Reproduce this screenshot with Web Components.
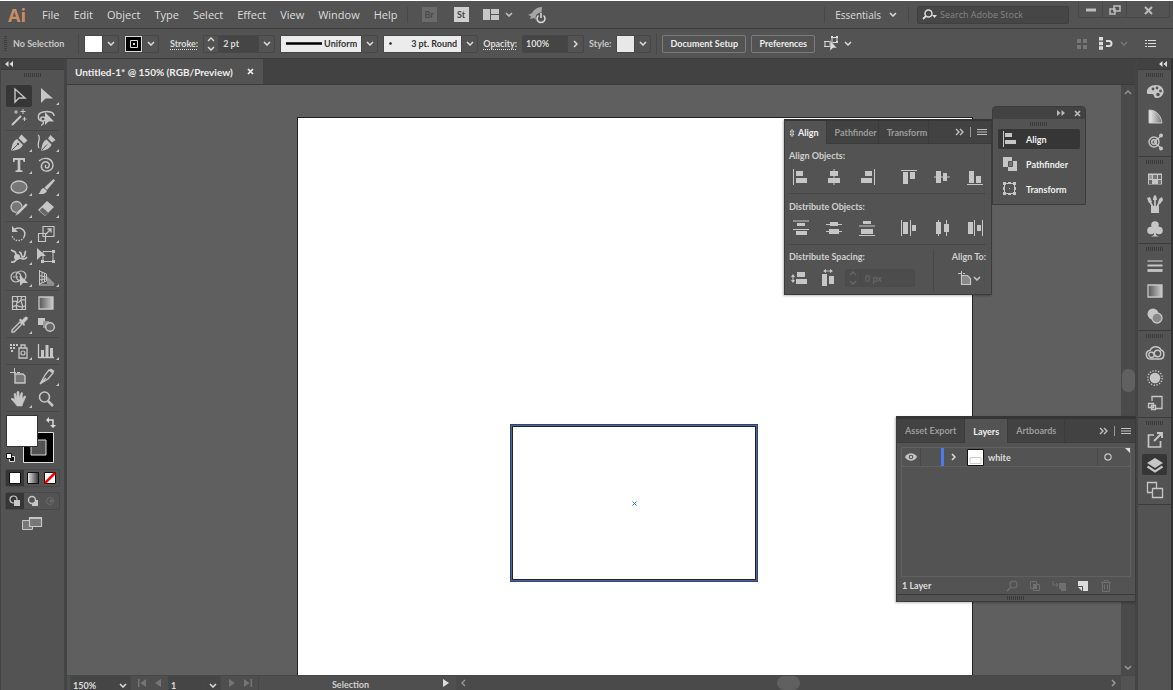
<!DOCTYPE html>
<html lang="en">
<head>
<meta charset="utf-8">
<title>Untitled-1* @ 150% (RGB/Preview)</title>
<style>
html,body{margin:0;height:100%;background:#535353}
body{font-family:Lato,"Open Sans",sans-serif;font-size:9px;font-weight:700;color:#dcdcdc;overflow:hidden;
--panel:#535353;--dark:#424242;--line:#3b3b3b;--field:#454545;--icon:#c6c6c6;--canvas:#5f5f5f}
</style>
</head>
<body>
<ai-app></ai-app>
<script>
const C='fill="currentColor"',N='fill="none"',S='fill="none" stroke="currentColor"';
// name: [width, height, markup]
const ICONS={
chev:[8,5,`<path d="M1 1l3 3 3-3" ${S} stroke-width="1.5"/>`],
chevUp:[8,5,`<path d="M1 4l3-3 3 3" ${S} stroke-width="1.3"/>`],
chevR:[5,8,`<path d="M1 1l3 3-3 3" ${S} stroke-width="1.5"/>`],
chevL:[5,8,`<path d="M4 1L1 4l3 3" ${S} stroke-width="1.3"/>`],
collapse:[8,6,`<path d="M3.500 0v6L0 3zM8 0v6L4.500 3z" ${C}/>`],
expand:[8,6,`<path d="M0 0v6l3.500-3zM4.500 0v6L8 3z" ${C}/>`],
dblR:[9,8,`<path d="M1 1l3 3-3 3M5 1l3 3-3 3" ${S} stroke-width="1.400"/>`],
close:[7,7,`<path d="M1 1l5 5M6 1L1 6" ${S} stroke-width="1.700"/>`],
burger:[10,8,`<path d="M0 1.500h10M0 4h10M0 6.500h10" ${S} stroke-width="1.200"/>`],
grip:[18,4,`<path d="M0 2h18" ${N} stroke="#3a3a3a" stroke-width="4" stroke-dasharray="1 1"/>`],
updown:[6,10,`<path d="M1 4l2-2.500L5 4zM1 6l2 2.500L5 6z" ${S} stroke-width=".8"/>`],
layout:[16,12,`<path d="M0 0h7v11H0zM8 0h8v5H8zM8 6h8v5H8z" ${C}/>`],
rocket:[20,18,`<path d="M15 1C10 1 7 4 5 7L1 9l3 1-1 3 4-1 2 2C14 11 15 6 15 1z" ${C} opacity=".6"/><circle cx="14" cy="12" r="5.500" fill="#535353"/><path d="M11.500 9.500a4 4 0 1 0 5 0M14 7v5" ${S} stroke-width="1.500"/>`],
search:[16,11,`<circle cx="6.500" cy="4.500" r="3.500" ${S} stroke-width="1.500"/><path d="M4 7L1 10" ${S} stroke-width="1.800"/><path d="M10 6h5l-2.500 3z" ${C}/>`],
min:[10,4,`<path d="M0 2h10" ${S} stroke-width="3"/>`],
restore:[12,10,`<path d="M5 1h6v5H5zM1 4h5v5H1z" ${S} stroke-width="1.500"/>`],
closeW:[9,9,`<path d="M1 1l7 7M8 1L1 8" ${S} stroke-width="2"/>`],
isolate:[16,15,`<path d="M9 1.500h5v5H9zM2 5.500h5v5H2z" ${S}/><path d="M8 0h2v2H8zM13 0h2v2h-2zM13 5h2v2h-2zM1 5h2v1H1zM1 10h2v1H1z" ${C}/><path d="M7 4v11l3-3h4z" ${C} stroke="#535353" stroke-width=".5"/>`],
gridpx:[12,12,`<path d="M1 1h4v4H1zM7 1h4v4H7zM1 7h4v4H1zM7 7h4v4H7z" ${C}/>`],
snap:[14,13,`<path d="M0 0h4v3.500H0zM0 4.700h4v3.500H0zM0 9.300h4v3.500H0z" ${C}/><path d="M7 4h3a2.500 2.500 0 0 1 0 5H7" ${S} stroke-width="2"/>`],
list:[11,9,`<path d="M0 1.500h2M0 4.500h2M0 7.500h2M3 1.500h8M3 4.500h8M3 7.500h8" ${S} stroke-width="1.200"/>`],
stroke:[36,3,`<path d="M0 1.500h36" stroke="#000" stroke-width="2.500"/>`],
dot:[3,3,`<circle cx="1.500" cy="1.500" r="1.300" fill="#222"/>`],
// toolbox
select:[20,20,`<path d="M6 3v13l4-4h6z" ${S} stroke-width="1.400"/>`],
direct:[20,20,`<path d="M5 2v15l4.500-4.500H17z" ${C}/>`],
wand:[20,20,`<path d="M3 17l9-9" ${S} stroke-width="2.200"/><path d="M14 1v5M11.500 3.500h5M7 2v4M5 4h4M15.500 9v4M13.500 11h4" ${S}/>`],
lasso:[20,20,`<path d="M6 13C1 12 1 5 7 4c5-1.500 11 0 11 4M7 9c-3 0-3 4 0 4s3-4 0-4M7 13c1 2 0 4-2 4" ${S} stroke-width="1.500"/><path d="M9 4v13l3.500-3.500H18z" ${C}/>`],
pen:[20,20,`<path d="M2 18c1-6 2-10 6-12l6 6c-2 4-6 5-12 6z" ${C}/><path d="M9.500 5l3-3.500 6 6-3.500 3z" ${C}/><path d="M2.500 17.500l6-6" stroke="#535353"/><circle cx="9" cy="11" r="1.200" fill="#535353"/>`],
curve:[20,20,`<path d="M5 18c1-6 2-10 5.500-11.500l5 5c-1.500 4-5 5.500-10.500 6.500z" ${C}/><path d="M12 5.500l2.500-3.500 5 5-3.500 2.500z" ${C}/><path d="M5.500 17.500l5.500-6" stroke="#535353"/><path d="M2 2c4 2-2 9 1 13" ${S} stroke-width="1.300"/>`],
type:[20,20,`<path d="M4 3h12v4h-1.500L14 5h-2.700v10l2.200.5V17h-7v-1.500l2.200-.5V5H6l-.5 2H4z" ${C}/>`],
spiral:[20,20,`<path d="M3 6c4-4 13-4 14 4 0 6-8 8-11 4-2-4 1-8 5-7 4 2 2 6 0 6s-2-2-1-3" ${S} stroke-width="1.400"/>`],
ellipse:[20,20,`<ellipse cx="10" cy="10" rx="8" ry="6" fill="#777" stroke="currentColor" stroke-width="1.300"/>`],
brush:[20,20,`<path d="M17.500 2L19 3.500 11 13 8.500 10.500zM8 11l3 3C9 18 5 17 2 17c3-1 2-5.500 6-6z" ${C}/>`],
shaper:[20,20,`<circle cx="7.500" cy="8" r="5.500" fill="#777" stroke="currentColor" stroke-width="1.300"/><path d="M17 4l2 2-9 9-4 2 1.500-4z" ${C} stroke="#535353" stroke-width=".6"/>`],
eraser:[20,20,`<path d="M11 2l7 6-9 9-7-6z" ${C}/><path d="M6.500 8.500l6 5.500-3.500 2.500-5.500-5z" fill="#666"/>`],
rotate:[20,20,`<path d="M6 5c6-3 12 2 9 8" ${S} stroke-width="1.500"/><path d="M15 13c-2 5-11 5-12-2" ${S} stroke-width="1.400" stroke-dasharray="1.500 1.200"/><path d="M3 2v6h6z" ${C}/>`],
scale:[20,20,`<path d="M7 2.500h11v10H7zM2.500 9.500h7v8h-7z" ${S} stroke-width="1.200"/><path d="M10 10l5-5M11.500 5H15v3.500" ${S} stroke-width="1.300"/>`],
warp:[20,20,`<path d="M2 16c6 1 4-4 8-4s5 3 8-1M2 4l4 2 2 4M10 6c4 0 1 5 4 5s1-5 3-6" ${S} stroke-width="1.700"/><circle cx="8" cy="11" r="3" ${C}/>`],
free:[20,20,`<path d="M7 5.500h10v10H7z" ${S}/><path d="M16 4h3v3h-3zM16 14h3v3h-3zM5 14h3v3H5z" ${C}/><path d="M1 2v12l4-4h5z" ${C}/>`],
shapeb:[20,20,`<circle cx="7" cy="9" r="5" ${S} stroke-width="1.200"/><circle cx="12" cy="8" r="5" ${S} stroke-width="1.200"/><path d="M4 9h7" ${S} stroke-dasharray="2 1"/><path d="M11 7v11l3-3h5z" ${C}/>`],
persp:[20,20,`<path d="M3.500 2v15M3.500 3l7 3v7l-7 3M6 4v11M8.500 5v9M3 7.500l7 1.500M3 12l7-1M3 17h15" ${S}/><path d="M11 8l8 8h-8z" ${C} opacity=".55"/>`],
mesh:[20,20,`<path d="M3.500 3.500h13v13h-13z" ${S} stroke-width="1.200"/><path d="M4 9c3-3 5 3 7-1 1-2 3-1 5-1M4 14c4-4 6 2 12-1M8 4c3 4-3 7 0 12M13 4c-4 4 3 8 0 12" ${S} stroke-width="1.200"/>`],
grad:[20,20,`<defs><linearGradient id="g"><stop offset="0" stop-color="#555"/><stop offset="1" stop-color="#ccc"/></linearGradient></defs><path d="M3 4h14v12H3z" fill="url(#g)" stroke="currentColor" stroke-width="1.300"/>`],
eyedrop:[20,20,`<path d="M11 7l2 2-8 8H3v-2z" ${S} stroke-width="1.400"/><path d="M10 5l1.500-1.500L13 5l3-3c2-1 4 1 2 3l-3 3 1 1.500L15 11z" ${C}/>`],
blend:[20,20,`<path d="M2 3h7v7H2z" ${C}/><path d="M7 6h6v7H7z" fill="#999"/><circle cx="14" cy="12" r="4.300" fill="#666" stroke="currentColor" stroke-width="1.400"/>`],
spray:[20,20,`<path d="M10 7h8v10h-8zM12 4h4v3h-4z" ${S} stroke-width="1.300"/><circle cx="14" cy="12" r="2" ${S} stroke-width="1.200"/><path d="M1 3h2v2H1zM4 3h2v2H4zM7 3h2v2H7zM1 6h2v2H1zM4 6h2v2H4zM2 9h2v2H2z" ${C}/>`],
graph:[20,20,`<path d="M2.500 3v13.500H18" ${S} stroke-width="1.300"/><path d="M5 9h3v7H5zM9.500 4h3v12h-3zM14 7h3v9h-3z" ${C}/>`],
artb:[20,20,`<path d="M5.500 1v6M1 5.500h6M8 5.500h3" ${S}/><path d="M6 7h8l2 2v7H6z" fill="#777" stroke="currentColor" stroke-width="1.400"/>`],
slice:[20,20,`<path d="M13 3l4 3-5 6-8 5 5-9zM4 17l6-6" ${S} stroke-width="1.300"/><path d="M13 3l2-1.500L18.500 4 17 6z" ${C}/>`],
hand:[20,20,`<path d="M8 17c-2-3-4-5-6-7 1-1.500 3 0 4 1L5 5c1-1.500 2 0 2 1l1 3V3c1-1.500 2 0 2 0v6l2-5c1-1 2 0 1.500 1L13 10l2.500-3c1-.5 1.500.5 1 1.500L14 14l-1 3z" ${C} stroke="currentColor" stroke-width=".6"/>`],
zoomt:[20,20,`<circle cx="8.500" cy="8" r="5" ${S} stroke-width="1.600"/><path d="M12 12l5 5" ${S} stroke-width="2.500"/>`],
colors:[52,52,`<path d="M19.500 18.500h30v30h-30z" fill="#000" stroke="#ddd"/><path d="M27 26h15v15H27z" fill="#535353" stroke="#ddd"/><path d="M2.500 1.500h31v31h-31z" fill="#fff" stroke="#333"/><path d="M44 6h5v6" ${S} stroke-width="1.400"/><path d="M45 3v6l-3-3zM46 11h6l-3 3z" ${C}/><path d="M5.500 42.500h5v5h-5z" fill="#111" stroke="#ddd"/><path d="M2.500 39.500h5v5h-5z" fill="#fff" stroke="#111"/>`],
cSolid:[12,12,`<path d="M.5.5h11v11H.5z" fill="#fff" stroke="#111"/>`],
cGrad:[12,12,`<defs><linearGradient id="g"><stop offset="0" stop-color="#eee"/><stop offset="1" stop-color="#333"/></linearGradient></defs><path d="M.5.5h11v11H.5z" fill="url(#g)" stroke="#111"/>`],
cNone:[12,12,`<path d="M.5.5h11v11H.5z" fill="#fff" stroke="#111"/><path d="M1 11L11 1" stroke="#f00" stroke-width="2.500"/>`],
dNorm:[12,12,`<circle cx="4.500" cy="4.500" r="3.500" ${S} stroke-width="1.200"/><path d="M5 5h6v6H5z" ${C}/>`],
dBehind:[12,12,`<path d="M5 5h6v6H5z" ${C}/><circle cx="5" cy="5" r="3.500" fill="#535353" stroke="currentColor" stroke-width="1.400"/>`],
dIn:[12,12,`<circle cx="6" cy="6" r="3.500" fill="none" stroke="#6c6c6c"/><circle cx="7" cy="6" r="1.500" fill="#6c6c6c"/>`],
screen:[22,16,`<path d="M1.500 5.500h10v9h-10z" fill="#777" stroke="currentColor"/><path d="M8.500 2.500h12v9h-12z" fill="#777" stroke="currentColor" stroke-width="1.200"/><path d="M8 3h13" ${S} stroke-width="2"/>`],
// dock
palette:[20,20,`<path d="M2 11c-1-5 4-8 9-8 6 0 9 5 7 9-2 5-9 5-9 2 0-2-2-2-4-2s-3 0-3-1z" ${C}/><circle cx="8" cy="7" r="1.400" fill="#535353"/><circle cx="12" cy="6" r="1.400" fill="#535353"/><circle cx="15.500" cy="9" r="1.400" fill="#535353"/><circle cx="13" cy="12.500" r="1.800" fill="#535353"/>`],
guide:[20,20,`<defs><linearGradient id="g"><stop offset="0" stop-color="#eee"/><stop offset="1" stop-color="#777"/></linearGradient></defs><path d="M4 3c8 0 12 6 13 13H4z" fill="url(#g)" stroke="currentColor"/>`],
theme:[20,20,`<circle cx="9" cy="10" r="5" ${S} stroke-width="1.400"/><circle cx="9" cy="10" r="2.300" ${S} stroke-width="1.500"/><path d="M9 10l7-6M9 10l7 6" ${S} stroke-width="1.200"/><circle cx="16" cy="3.500" r="2" ${C}/><circle cx="16" cy="16.500" r="2" ${C}/>`],
swatch:[20,20,`<path d="M3 4.500h14v11H3z" ${C}/><path d="M4 6h3v4H4z" fill="#999"/><path d="M8 6h4v4H8zM13 11h3v4h-3z" fill="#777"/><path d="M4 11h3v4H4zM13 6h3v4h-3z" fill="#666"/>`],
brushes:[20,20,`<path d="M6 12h8v7H6z" ${C}/><path d="M8 13L4 6M10 13V4M12 13l4-8" ${S} stroke-width="1.700"/><path d="M8 6c0-2 1-5 2-5s2 3 2 5zM2 4l3-1 2 5-3 1zM14 5l3-2 1 3-3 4-2-1z" ${C}/>`],
club:[20,20,`<circle cx="10" cy="6" r="3.800" ${C}/><circle cx="6" cy="11.500" r="3.800" ${C}/><circle cx="14" cy="11.500" r="3.800" ${C}/><path d="M9 9h2v7l3 1.500H6L9 16z" ${C}/>`],
lines:[20,20,`<path d="M2.500 5h15" ${S} stroke-width="1.200"/><path d="M2.500 9.500h15" ${S} stroke-width="2"/><path d="M2.500 14.500h15" ${S} stroke-width="2.800"/>`],
transp:[20,20,`<circle cx="8" cy="8" r="5.500" ${C}/><circle cx="12" cy="12" r="5" fill="#888" stroke="currentColor" stroke-width="1.300"/>`],
cc:[20,20,`<path d="M6 16C0 16 0 8 5 7.500 7 2.500 14 2.500 16 7c4 1 4 9-1 9z" ${S} stroke-width="1.500"/><circle cx="6.500" cy="11.800" r="2.700" ${S} stroke-width="1.300"/><circle cx="12.500" cy="10.500" r="3.200" ${S} stroke-width="1.400"/><path d="M7 9l5 5" ${S} stroke-width="1.300"/>`],
sun:[20,20,`<circle cx="10" cy="10" r="5.300" ${C}/><circle cx="10" cy="10" r="7.200" ${S} stroke-width="1.400" stroke-dasharray="1.300 1.530"/>`],
gstyle:[20,20,`<path d="M7 8V3.500h10v12h-7" ${S} stroke-width="1.300"/><path d="M3.500 10.500h5v4h-5zM6.500 12.500h4v4h-4z" ${S} stroke-width="1.300"/>`],
exporti:[20,20,`<path d="M9 5H3.500v12h12v-6" ${S} stroke-width="1.700"/><path d="M9 11l7-7M12 3h5v5" ${S} stroke-width="1.900"/>`],
layersi:[20,20,`<path d="M10 3l8 5-8 5-8-5z" ${C}/><path d="M2.500 11.500l7.500 5 7.500-5" ${S} stroke-width="2.200"/>`],
artbs:[20,20,`<path d="M2.500 2.500h9v10h-9z" ${S} stroke-width="1.300"/><path d="M7.500 8.500h10v9h-10z" fill="#535353" stroke="currentColor" stroke-width="1.300"/>`],
// align panel
aL:[18,18,`<path d="M1 1h1v16H1zM4 3h7v5H4zM4 10h11v5H4z" ${C}/>`],
aC:[18,18,`<path d="M8.500 1h1v16h-1zM5 3h8v5H5zM3 10h12v5H3z" ${C}/>`],
aR:[18,18,`<path d="M16 1h1v16h-1zM7 3h7v5H7zM3 10h11v5H3z" ${C}/>`],
aT:[18,18,`<path d="M1 2h16v1H1zM3 4h5v12H3zM10 4h5v7h-5z" ${C}/>`],
aM:[18,18,`<path d="M1 8.500h16v1H1zM3 3h5v12H3zM10 5h4v8h-4z" ${C}/>`],
aB:[18,18,`<path d="M1 16h16v1H1zM3 3h5v12H3zM10 8h5v7h-5z" ${C}/>`],
dT:[18,18,`<path d="M1 1.500h16v1H1zM5 4h8v3H5zM1 10h16v1H1zM4 12h11v4H4z" ${C}/>`],
dM:[18,18,`<path d="M1 5h16v1H1zM5 3h8v4H5zM1 12h16v1H1zM4 10h10v5H4z" ${C}/>`],
dB:[18,18,`<path d="M1 6.500h16v1H1zM5 2h8v3H5zM1 16h16v1H1zM3 10h12v5H3z" ${C}/>`],
dL:[18,18,`<path d="M1 1h1v16H1zM3 3h5v12H3zM10 1h1v16h-1zM12 6h4v6h-4z" ${C}/>`],
dC:[18,18,`<path d="M5 1h1v16H5zM3 3h5v12H3zM13 1h1v16h-1zM11 5h5v8h-5z" ${C}/>`],
dR:[18,18,`<path d="M8 1h1v16H8zM2 3h5v12H2zM16 1h1v16h-1zM11 6h4v6h-4z" ${C}/>`],
sV:[18,18,`<path d="M6 3h8v5H6zM5 10h11v5H5z" ${C}/><path d="M2 6v7" ${S}/><path d="M0 8l2-3 2 3zM0 11l2 3 2-3z" ${C}/>`],
sH:[18,18,`<path d="M3 5h5v12H3zM10 7h5v8h-5z" ${C}/><path d="M5 2h8" ${S}/><path d="M7 0L4 2l3 2zM11 0l3 2-3 2z" ${C}/>`],
aTo:[14,14,`<path d="M3.500 0v4M0 2.500h3M5 2.500h2" ${S}/><path d="M3.500 4.500h6l3 3v6h-9z" fill="#888" stroke="currentColor" stroke-width="1.200"/>`],
pAlign:[16,16,`<path d="M1 0h1v16H1zM3 2h7v4H3zM3 9h11v4H3z" ${C}/>`],
pPath:[16,16,`<path d="M1 1h9v4h5v10H6v-4H1z" ${C}/><path d="M6.500 5.500h4v5h-4z" fill="#777" stroke="#535353"/>`],
pTrans:[16,16,`<path d="M2.500 2.500h10v10h-10z" ${S}/><path d="M1 1h3v3H1zM11 1h3v3h-3zM1 11h3v3H1zM11 11h3v3h-3zM6 1h3v2H6zM6 12h3v2H6zM1 6h2v3H1zM12 6h2v3h-2zM7 7h1v1H7z" ${C}/>`],
// layers panel
eye:[12,8,`<path d="M0 4c3-5 9-5 12 0-3 5-9 5-12 0z" ${C}/><circle cx="6" cy="4" r="2.300" fill="#535353"/><circle cx="6" cy="4" r="1.200" ${C}/>`],
thumb:[17,17,`<path d="M.5.5h16v16H.5z" fill="#fff" stroke="#111"/><path d="M3 8.500h11v6H3z" fill="#fff" stroke="#ccc"/>`],
ring:[8,8,`<circle cx="4" cy="4" r="3.200" ${S} stroke-width="1.200"/>`],
find:[12,12,`<circle cx="7.500" cy="4.500" r="3.500" ${S} stroke-width="1.200"/><path d="M5 7l-4 4" ${S} stroke-width="1.500"/>`],
mask:[12,12,`<path d="M1.500 1.500h6v7h-6zM4.500 4.500h6v6h-6z" ${S}/><path d="M4 4h4v5H4z" ${C}/>`],
sublay:[14,12,`<path d="M7 3h7v8H9V9H7z" ${C}/><path d="M1 1v4h5M4 3l2 2-2 2" ${S}/>`],
newl:[12,12,`<path d="M1 1h10v10H6V6H1z" ${C}/><path d="M1 7h4v4z" ${C}/>`],
trash:[12,12,`<path d="M1 2.500h10M4 2V.5h4V2M2.500 3v8.500h7V3M4.500 4.500v5M7.500 4.500v5" ${S}/>`],
first:[8,8,`<path d="M0 0h1.500v8H0zM8 0v8L2.500 4z" ${C}/>`],
prev:[6,8,`<path d="M6 0v8L0 4z" ${C}/>`],
next:[6,8,`<path d="M0 0v8l6-4z" ${C}/>`],
last:[8,8,`<path d="M6.500 0H8v8H6.500zM0 0v8l5.500-4z" ${C}/>`]
};
const RESET=`*{box-sizing:border-box}
button,input,select{font:inherit;color:inherit;background:none;border:0;padding:0;margin:0;border-radius:0;appearance:none;outline:none;min-width:0}
button{display:flex;align-items:center;justify-content:center}a{color:inherit;text-decoration:none}`;
function define(name,css,html){
  const t=document.createElement('template');
  t.innerHTML=`<style>${RESET}${css}</style>`+(typeof html==='string'?html:'');
  customElements.define(name,class extends HTMLElement{
    constructor(){super();this.attachShadow({mode:'open'});}
    connectedCallback(){
      if(this.shadowRoot.childNodes.length)return;
      this.shadowRoot.append(t.content.cloneNode(true));
      if(typeof html==='function'){const f=document.createElement('template');f.innerHTML=html(this);this.shadowRoot.append(f.content.cloneNode(true));}
    }
  });
}
const ic=n=>`<ai-icon name="${n}"></ai-icon>`;

define('ai-icon',`:host{display:inline-flex;flex:none}svg{display:block}`,el=>{
  const [w,h,m]=ICONS[el.getAttribute('name')];
  return `<svg width="${w}" height="${h}" viewBox="0 0 ${w} ${h}" aria-hidden="true">${m}</svg>`;
});

define('ai-menubar',`
:host{display:flex;align-items:center;height:28px;padding:0 3px 0 8px;background:var(--panel);border-bottom:1px solid var(--line);font:11px "Open Sans",sans-serif}
.logo{font:700 18px "Open Sans",sans-serif;color:#c98d66;width:34px;line-height:24px}
nav{display:flex;gap:14px}
i{width:1px;height:16px;background:#474747}
.br,.st{width:15px;height:15px;font:700 9px Lato,sans-serif;background:#6a6a6a;color:#4a4a4a}
.st{background:#cfcfcf;color:#444}
.apps{display:flex;align-items:center;margin-left:9px;gap:14px}
.br{margin-right:3px}
.lay{gap:6px;color:var(--icon)}
.sp{flex:1}
.ess{font-size:10px;gap:8px;margin:0 11px 0 10px}
.search{display:flex;align-items:center;gap:2px;width:152px;height:18px;margin-left:8px;padding-left:4px;background:#464646;border:1px solid #3f3f3f;border-radius:2px}
.search input{flex:1;font:9px "Open Sans",sans-serif}
.search input::placeholder{color:#858585;opacity:1}
.win{display:flex;align-self:flex-start;height:17px;margin-left:9px;border:1px solid #474747;border-top:0;border-radius:0 0 3px 3px;color:#bdbdbd}
.win button{width:24px;border-right:1px solid #474747;padding-top:2px}.win button:last-child{width:42px;border:0}
`,`
<span class="logo">Ai</span>
<nav>${['File','Edit','Object','Type','Select','Effect','View','Window','Help'].map(x=>`<a href="#">${x}</a>`).join('')}</nav>
<div class="apps"><i></i><button class="br">Br</button><button class="st">St</button><button class="lay" aria-label="Arrange">${ic('layout')} ${ic('chev')}</button><button aria-label="GPU preview">${ic('rocket')}</button></div>
<div class="sp"></div><i></i><button class="ess">Essentials ${ic('chev')}</button><i></i>
<label class="search">${ic('search')}<input placeholder="Search Adobe Stock" aria-label="Search Adobe Stock"></label>
<div class="win"><button aria-label="Minimize">${ic('min')}</button><button aria-label="Restore">${ic('restore')}</button><button aria-label="Close">${ic('closeW')}</button></div>`);

// a boxed value with a drop button on its right edge
define('ai-drop',`
:host{display:flex;flex:none;min-width:0;height:18px;border:1px solid #474747;border-radius:2px;box-sizing:border-box}
.v{display:flex;align-items:center;flex:1;min-width:0}
b{display:flex;flex:none;align-items:center;justify-content:center;width:16px;border-left:1px solid #474747}
::slotted(*){flex:1;min-width:0}`,el=>`<div class="v"><slot></slot></div><b>${ic(el.getAttribute('arrow')||'chev')}</b>`);

define('ai-controlbar',`
:host{display:flex;align-items:center;height:30px;gap:5px;padding:0 17px 0 4px;background:var(--panel);border-bottom:1px solid var(--line)}
.grip{width:3px;height:16px;background:repeating-linear-gradient(#3d3d3d 0 1px,transparent 1px 2px)}
.sel{width:61px;color:#c8c8c8;padding-left:1px}
i{width:1px;height:20px;background:#474747}
u{text-decoration:underline dotted;text-underline-offset:2px}
input,select{font:inherit}
.sw{width:35px}.sw button{height:16px;background:#fff}
.sw .blk{background:#000;border:1px solid #ddd}
.blk svg{display:block}
.wt{display:flex;height:18px;width:72px}
.step{display:flex;flex:none;flex-direction:column;justify-content:center;gap:4px;width:16px;border:1px solid #474747;align-items:center}
.wt ai-drop{flex:1}
.stroke{margin-left:6px}
.dark{background:var(--field);height:16px;padding-left:3px}
.light{display:flex;align-items:center;background:#ececec;color:#333;height:16px;padding-left:5px}
.light select{flex:1;height:16px;text-align:right;text-align-last:right;padding-right:4px}
.btn{height:18px;border:1px solid #7b7b7b;border-radius:2px;color:#eee}
.sp{flex:1}`,`
<span class="grip"></span><span class="sel">No Selection</span><i></i>
<ai-drop class="sw"><button aria-label="Fill"></button></ai-drop>
<ai-drop class="sw"><button class="blk" aria-label="Stroke colour"><svg width="8" height="8"><path d="M.5.5h7v7h-7z" fill="#000" stroke="#ddd"/><path d="M3 3h2v2H3z" fill="#ddd"/></svg></button></ai-drop>
<label for="w" class="stroke"><u>Stroke:</u></label>
<div class="wt"><span class="step">${ic('chevUp')}${ic('chev')}</span><ai-drop><input class="dark" id="w" value="2 pt"></ai-drop></div>
<ai-drop style="width:98px"><div class="light">${ic('stroke')}<select aria-label="Profile"><option>Uniform</option></select></div></ai-drop>
<ai-drop style="width:95px"><div class="light">${ic('dot')}<select aria-label="Brush"><option>3 pt. Round</option></select></div></ai-drop>
<label for="o"><u>Opacity:</u></label>
<ai-drop arrow="chevR" style="width:62px"><input class="dark" id="o" value="100%"></ai-drop>
<span style="color:#c8c8c8">Style:</span><ai-drop class="sw"><button aria-label="Style" style="background:#e8e8e8"></button></ai-drop><i></i>
<button class="btn" style="width:84px">Document Setup</button><button class="btn" style="width:64px">Preferences</button>
<button style="gap:5px;margin-left:3px" aria-label="Isolate">${ic('isolate')}${ic('chev')}</button>
<span class="sp"></span>
<button style="color:#777" aria-label="Pixel grid">${ic('gridpx')}</button><button style="gap:7px;margin:0 12px 0 6px" aria-label="Snap">${ic('snap')}<ai-icon name="chev" style="color:#777"></ai-icon></button><button aria-label="Menu">${ic('list')}</button>`);

define('ai-tool',`
:host{display:block;position:relative}
button{width:26px;height:22px;color:var(--icon);border-radius:2px}
:host([active]) button{background:#363636}
:host([more])::after{content:"";position:absolute;right:0;bottom:2px;width:3px;height:3px;background:var(--icon);clip-path:polygon(100% 0,100% 100%,0 100%)}`,
el=>`<button aria-label="${el.getAttribute('icon')}">${ic(el.getAttribute('icon'))}</button>`);

const tools=s=>s.split(' ').map(n=>{const m=n.endsWith('+'),a=n.endsWith('!');return `<ai-tool icon="${n.replace(/[+!]/,'')}"${m?' more':''}${a?' active':''}></ai-tool>`}).join('');
define('ai-toolbox',`
:host{display:flex;flex-direction:column;width:67px;border-right:3px solid #444;border-left:1px solid #444;background:var(--panel);box-sizing:border-box}
header{display:flex;align-items:center;height:11px;padding-left:4px;background:var(--dark);border-bottom:1px solid var(--line)}
.grip{display:flex;justify-content:center;height:14px;padding-top:3px}
.g{display:grid;grid-template-columns:26px 26px;column-gap:1px;margin:0 5px;padding:1px 0;border-bottom:1px solid #474747}
.g.roomy{padding:2px 0}
.col{margin:2px 3px 3px;align-self:flex-start}
.row{display:flex;margin:0 4px 5px;border:1px solid #484848;border-radius:2px}
.row button{flex:1;height:16px;color:var(--icon)}
.row .on{background:#363636}
.scr{margin-left:20px;align-self:flex-start;color:var(--icon)}`,`
<header>${ic('collapse')}</header><div class="grip">${ic('grip')}</div>
<div class="g">${tools('select! direct+ wand lasso')}</div>
<div class="g">${tools('pen+ curve+ type+ spiral+ ellipse+ brush+ shaper+ eraser+')}</div>
<div class="g">${tools('rotate+ scale+ warp+ free shapeb+ persp+')}</div>
<div class="g">${tools('mesh grad eyedrop+ blend')}</div>
<div class="g roomy">${tools('spray+ graph+')}</div>
<div class="g">${tools('artb slice+ hand+ zoomt')}</div>
<button class="col" aria-label="Fill and stroke">${ic('colors')}</button>
<div class="row"><button class="on" aria-label="Color">${ic('cSolid')}</button><button aria-label="Gradient">${ic('cGrad')}</button><button aria-label="None">${ic('cNone')}</button></div>
<div class="row"><button class="on" aria-label="Draw normal">${ic('dNorm')}</button><button aria-label="Draw behind">${ic('dBehind')}</button><button aria-label="Draw inside">${ic('dIn')}</button></div>
<button class="scr" aria-label="Screen mode">${ic('screen')}</button>`);

define('ai-dock',`
:host{display:flex;flex-direction:column;width:38px;border-left:3px solid #444;border-right:2px solid #333;background:var(--panel);box-sizing:border-box}
header{display:flex;align-items:center;justify-content:flex-end;height:11px;padding-right:4px;background:var(--dark);border-bottom:1px solid var(--line)}
.g{display:flex;flex-direction:column;align-items:center;padding:3px 0 2px;border-bottom:1px solid var(--line)}
ai-icon{margin-bottom:2px}
header ai-icon,button ai-icon{margin:0}
button{width:25px;height:25px;color:var(--icon)}
.on{background:#363636;height:21px;margin:2px 0;border-radius:2px}`,`
<header>${ic('collapse')}</header>`+['palette guide theme','swatch brushes club','lines grad transp','cc sun gstyle','exporti layersi artbs'].map(g=>`<div class="g">${ic('grip')}${g.split(' ').map(n=>`<button${n==='layersi'?' class="on"':''} aria-label="${n}">${ic(n)}</button>`).join('')}</div>`).join(''));

define('ai-panel',`
:host{display:flex;flex-direction:column;background:var(--panel);border:1px solid var(--line);border-top:3px solid #353535;box-shadow:-1px 1px 2px #0004;box-sizing:border-box}
:host([tight]){border-top-width:2px}
header{display:flex;height:24px;background:var(--dark);border-bottom:1px solid var(--line);color:#9c9c9c}
:host([tight]) header{height:23px}
header button{padding:0 8px;border-right:1px solid var(--line);gap:3px}
:host([tight]) header button{padding:0 1px 0 8px}
:host([tight]) header .on{padding:0 7px 0 4px}
header .on{background:var(--panel);color:#f0f0f0;margin-bottom:-1px}
.m{display:flex;align-items:center;gap:6px;margin-left:auto;padding-right:4px;color:#c0c0c0}
.m i{width:1px;height:10px;background:#999}
section{flex:1;display:flex;flex-direction:column}`,el=>{
  const a=el.getAttribute('active');
  return `<header>${el.getAttribute('tabs').split(',').map(t=>`<button${t===a?' class="on"':''}>${t===a&&el.hasAttribute('cycle')?ic('updown'):''}${t}</button>`).join('')}<span class="m">${ic('dblR')}<i></i>${ic('burger')}</span></header><section><slot></slot></section>`;
});

const six=s=>{const b=s.split(' ').map(n=>`<button aria-label="${n}">${ic(n)}</button>`);return `<div class="six"><span>${b.slice(0,3).join('')}</span><span>${b.slice(3).join('')}</span></div>`};
define('ai-align',`
:host{display:block;padding:5px 5px 2px 4px;color:#cfcfcf}
h3{margin:0;font:inherit;line-height:14px}
.six{display:flex;justify-content:space-between;height:31px;padding:5px 2px 0 3px;border-bottom:1px solid #474747;margin-bottom:5px}
.six span{display:flex;gap:15px;height:18px}
.six+h3{line-height:15px}
button{color:var(--icon);height:18px}
.bot{display:flex;justify-content:space-between}
.row{display:flex;align-items:center;height:28px;gap:10px;padding-left:2px}
.sp{display:flex;align-items:center;width:70px;height:18px;background:#4c4c4c;color:#666;margin-left:-2px}
.sp span{display:flex;flex-direction:column;gap:4px;width:16px;align-items:center;border-right:1px solid #474747}
.sp input{width:40px;padding-left:4px}
.to{border-left:1px solid #474747;padding-left:18px}
.to button{margin-top:5px;padding-left:6px;gap:1px}`,`
<h3>Align Objects:</h3>${six('aL aC aR aT aM aB')}
<h3>Distribute Objects:</h3>${six('dT dM dB dL dC dR')}
<div class="bot"><div><h3>Distribute Spacing:</h3><div class="row"><button aria-label="Vertical spacing">${ic('sV')}</button><button aria-label="Horizontal spacing">${ic('sH')}</button><label class="sp"><span>${ic('chevUp')}${ic('chev')}</span><input aria-label="Spacing" value="0 px" disabled></label></div></div>
<div class="to"><h3>Align To:</h3><button aria-label="Align to">${ic('aTo')}${ic('chev')}</button></div></div>`);

define('ai-layers',`
:host{display:flex;flex-direction:column;flex:1}
.list{flex:1;margin:4px 4px 0 4px;border:1px solid #616161}
.r{display:flex;align-items:center;height:19px;border-bottom:1px solid #616161;color:#ddd}
.r>*{flex:none}
.e{width:19px;height:18px;padding-right:1px;border-right:1px solid #484848;color:var(--icon)}
.l{width:23px;height:18px;display:flex;justify-content:flex-end}
.l::after{content:"";width:3px;background:#4a7bf0}
.x{width:23px;padding-right:4px}
.r .n{flex:1;padding-left:4px}
.t{width:21px;height:18px;border-left:1px solid #484848;color:var(--icon)}
.c{width:12px;height:18px;display:flex;justify-content:flex-end}
.c::after{content:"";width:5px;height:5px;background:#ddd;clip-path:polygon(0 0,100% 0,100% 100%)}
footer{display:flex;align-items:center;height:17px;padding:0 23px 0 5px;gap:11px;color:#6f6f6f}
footer span{flex:1;color:#ddd}
.grip{display:flex;justify-content:center;border-top:1px solid var(--line);height:7px;padding-top:1px}`,`
<div class="list"><div class="r"><button class="e" aria-label="Visibility">${ic('eye')}</button><span class="l"></span><button class="x" aria-label="Expand">${ic('chevR')}</button>${ic('thumb')}<span class="n">white</span><button class="t" aria-label="Target">${ic('ring')}</button><span class="c"></span></div></div>
<footer><span>1 Layer</span><button aria-label="Locate">${ic('find')}</button><button aria-label="Mask">${ic('mask')}</button><button aria-label="Sublayer">${ic('sublay')}</button><button aria-label="New layer" style="color:#ddd">${ic('newl')}</button><button aria-label="Delete">${ic('trash')}</button></footer>
<div class="grip">${ic('grip')}</div>`);

define('ai-iconpanel',`
:host{display:block;background:var(--panel);border:1px solid var(--line);border-radius:4px 4px 0 0;box-sizing:border-box}
header{display:flex;align-items:center;justify-content:flex-end;gap:9px;height:12px;padding-right:4px;background:var(--dark);color:#bbb;border-radius:3px 3px 0 0}
.grip{display:flex;justify-content:center;height:10px;padding-top:3px}
button.i{display:flex;justify-content:flex-start;gap:8px;width:82px;height:20px;margin:0 0 5px 5px;padding-left:4px;border-radius:2px;color:#f0f0f0}
.i.on{background:#363636}.i ai-icon{color:var(--icon)}`,`
<header>${ic('expand')}${ic('close')}</header><div class="grip">${ic('grip')}</div>
<button class="i on">${ic('pAlign')}Align</button><button class="i">${ic('pPath')}Pathfinder</button><button class="i">${ic('pTrans')}Transform</button>`);

define('ai-status',`
:host{display:flex;height:15px;padding-left:3px;background:#4f4f4f;border-top:1px solid #474747;overflow:hidden;box-sizing:border-box}
.f{height:18px;background:var(--field)}
.f select{width:100%;height:18px;padding-left:2px}
.nav{display:flex;align-items:center;justify-content:center;gap:9px;width:37px;color:#757575}
.t{width:184px;text-align:center;line-height:18px;border-left:1px solid #474747;color:#cfcfcf}
.sc{flex:1;display:flex;align-items:center;justify-content:space-between;background:#4a4a4a;padding:0 5px;margin-left:6px;color:#999}
.th{width:23px;height:14px;border-radius:7px;background:#606060}
.p{width:14px;background:#535353}`,`
<ai-drop class="f" style="width:61px"><select aria-label="Zoom"><option>150%</option></select></ai-drop>
<div class="nav">${ic('first')}${ic('prev')}</div>
<ai-drop class="f" style="width:53px"><select aria-label="Artboard"><option>1</option></select></ai-drop>
<div class="nav" style="padding-left:2px">${ic('next')}${ic('last')}</div>
<div class="t">Selection</div><div class="nav" style="width:8px;color:#ddd">${ic('next')}</div>
<div class="sc">${ic('chevL')}<span class="th"></span>${ic('chevR')}</div><div class="p"></div>`);

define('ai-document',`
:host{display:flex;flex-direction:column;flex:1;min-width:0;position:relative;background:var(--canvas)}
.tabs{display:flex;height:26px;background:var(--dark);border-bottom:1px solid var(--line)}
.tab{display:flex;align-items:center;width:196px;padding:0 9px 0 8px;justify-content:space-between;background:var(--panel);font-size:10px;color:#eee}
.mid{flex:1;display:flex;min-height:0}
.cv{flex:1;position:relative;overflow:hidden}
.ab{position:absolute;left:230px;top:32px;bottom:-10px;width:676px;background:#fff;border:1px solid #222}
.rect{position:absolute;left:212px;top:306px;width:248px;height:158px;border:1px solid #444;display:flex;align-items:center;justify-content:center}
.rect::before{content:"";position:absolute;inset:0;border:1px solid #3a66cc}
.rect::after{content:"";position:absolute;inset:1px;border:1px solid #222}
.vs{width:14px;background:#4a4a4a;display:flex;flex-direction:column;align-items:center;justify-content:space-between;padding:5px 0;color:#999}
.vs span{width:13px;height:23px;border-radius:6px;background:#606060}
.pa{position:absolute;top:60px;right:143px;width:208px}
.pi{position:absolute;top:47px;right:49px;width:94px}
.pl{position:absolute;top:357px;right:-1px;width:240px;height:186px}`,`
<div class="tabs"><div class="tab"><span>Untitled-1* @ 150% (RGB/Preview)</span><button aria-label="Close tab">${ic('close')}</button></div></div>
<div class="mid"><div class="cv"><div class="ab"><div class="rect"><svg width="5" height="5"><path d="M.5.5l4 4M4.500.5l-4 4" stroke="#2f7be0"/></svg></div></div></div>
<div class="vs">${ic('chevUp')}<span></span>${ic('chev')}</div></div>
<ai-status></ai-status>
<ai-panel class="pa" tabs="Align,Pathfinder,Transform" active="Align" cycle tight><ai-align></ai-align></ai-panel>
<ai-iconpanel class="pi"></ai-iconpanel>
<ai-panel class="pl" tabs="Asset Export,Layers,Artboards" active="Layers"><ai-layers></ai-layers></ai-panel>`);

define('ai-app',`
:host{display:flex;flex-direction:column;height:100vh;border-top:1px solid #fff;box-sizing:border-box}
main{flex:1;display:flex;min-height:0}
ai-document{z-index:1}`,`
<ai-menubar></ai-menubar><ai-controlbar></ai-controlbar>
<main><ai-toolbox></ai-toolbox><ai-document></ai-document><ai-dock></ai-dock></main>`);
</script>
</body>
</html>
